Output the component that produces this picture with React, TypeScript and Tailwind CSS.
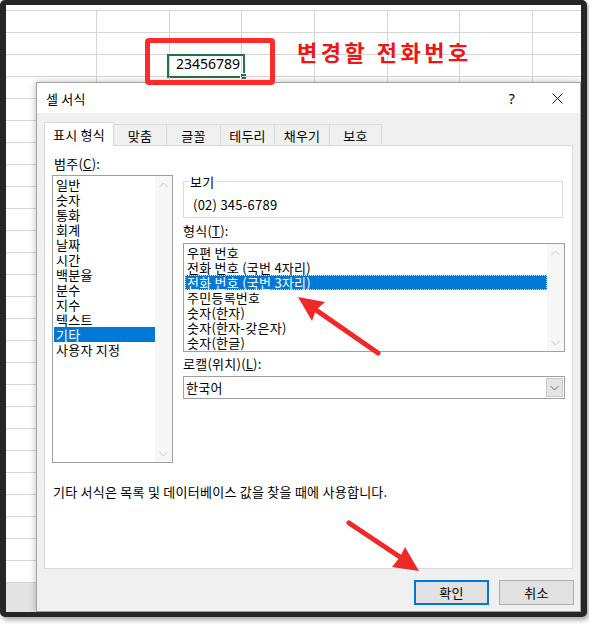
const CATEGORIES = ['일반', '숫자', '통화', '회계', '날짜', '시간', '백분율', '분수', '지수', '텍스트', '기타', '사용자 지정']
const FORMATS = ['우편 번호', '전화 번호 (국번 4자리)', '전화 번호 (국번 3자리)', '주민등록번호', '숫자(한자)', '숫자(한자-갖은자)', '숫자(한글)']
const TABS = [
  { label: '맞춤', w: 'w-[54px]' },
  { label: '글꼴', w: 'w-[55px]' },
  { label: '테두리', w: 'w-[55px]' },
  { label: '채우기', w: 'w-[56px]' },
  { label: '보호', w: 'w-[53px]' },
]
const COL_W = ['w-[91px]', 'w-[73px]', 'w-[72px]', 'w-[73px]', 'w-[73px]', 'w-[72px]', 'w-[73px]']

function Chevron({ up = false, color = '#c4c4c4' }: { up?: boolean; color?: string }) {
  return (
    <svg width="9" height="6" viewBox="0 0 9 6">
      <polyline
        points={up ? '0.5,5 4.5,1 8.5,5' : '0.5,1 4.5,5 8.5,1'}
        fill="none"
        stroke={color}
        strokeWidth="1"
      />
    </svg>
  )
}

function ScrollBar() {
  return (
    <div className="w-[17px] flex flex-col justify-between bg-[#f7f7f7]">
      <div className="h-[17px] flex items-center justify-center"><Chevron up /></div>
      <div className="h-[17px] flex items-center justify-center"><Chevron /></div>
    </div>
  )
}

function Sheet() {
  return (
    <div className="flex flex-col h-full">
      <div className="h-[6px] border-b border-[#d6d6d6]" />
      {Array.from({ length: 26 }).map((_, r) => (
        <div key={r} className="flex h-[22px]">
          {COL_W.map((w, c) => (
            <div key={c} className={`${w} shrink-0 border-r border-b border-[#d6d6d6] relative`}>
              {r === 2 && c === 2 && (
                <>
                  <div className="text-right pr-[1px] text-[14px] leading-[17px] text-black font-['Noto_Sans',sans-serif]">
                    23456789
                  </div>
                  {/* active cell */}
                  <div className="absolute left-[-3px] top-[-1px] w-[78px] h-[24px] border-2 border-[#217346]">
                    <span className="absolute right-[-4px] bottom-[-4px] w-[7px] h-[7px] bg-[#217346] border border-white" />
                  </div>
                </>
              )}
            </div>
          ))}
          <div className="flex-1 border-b border-[#d6d6d6]" />
        </div>
      ))}
      <div className="flex-1 bg-[#e4e4e4]" />
    </div>
  )
}

function Dialog() {
  return (
    <div className="absolute left-[30px] top-[77px] w-[545px] h-[530px] border border-[#a3a3a3] bg-white flex flex-col shadow-[0_0_7px_rgba(0,0,0,0.28)] text-[13px] tracking-[0.25px] text-black">
      {/* Title bar */}
      <div className="h-[30px] flex items-center pl-[9px] pr-[17px] bg-white">
        <span className="leading-[15px]">셀 서식</span>
        <span className="ml-auto text-[14px] leading-[15px] w-[10px] text-center font-['Noto_Sans',sans-serif]">?</span>
        <svg className="ml-[35px]" width="11" height="11" viewBox="0 0 11 11">
          <path d="M0.5 0.5 L10.5 10.5 M10.5 0.5 L0.5 10.5" stroke="#1a1a1a" strokeWidth="1" />
        </svg>
      </div>

      <div className="flex-1 bg-[#f0f0f0] px-[7px] pt-[9px] pb-[6px] flex flex-col">
        {/* Tabs */}
        <div className="flex items-end h-[23px]">
          <div className="relative z-10 self-start w-[70px] h-[24px] bg-white border border-b-0 border-[#d9d9d9] flex items-center justify-center leading-[15px]">
            표시 형식
          </div>
          {TABS.map(t => (
            <div
              key={t.label}
              className={`${t.w} -ml-px h-[21px] bg-[#f0f0f0] border border-b-0 border-[#d9d9d9] flex items-center justify-center leading-[15px]`}
            >
              {t.label}
            </div>
          ))}
        </div>

        {/* Panel */}
        <div className="h-[424px] bg-white border border-[#d9d9d9] flex flex-col pl-[7px] pr-[6px]">
          <div className="flex gap-[10px]">
            {/* Category */}
            <div className="w-[121px] pt-[10px] flex flex-col">
              <div className="pl-[2px] leading-[15px]">범주(<span className="underline">C</span>):</div>
              <div className="mt-[4px] h-[288px] border border-[#a0a0a0] flex">
                <div className="flex-1 pt-[1px] pl-[1px]">
                  {CATEGORIES.map(c => (
                    <div
                      key={c}
                      className={`pl-[2px] h-[15px] leading-[15px] whitespace-nowrap ${c === '기타' ? 'bg-[#0078d7] text-white' : ''}`}
                    >
                      {c}
                    </div>
                  ))}
                </div>
                <ScrollBar />
              </div>
            </div>

            {/* Right side */}
            <div className="w-[382px] pt-[28px] flex flex-col">
              <fieldset className="w-[380px] border border-[#dcdcdc] pb-[5px]">
                <legend className="ml-[5px] px-[1px] leading-[15px]">보기</legend>
                <div className="pl-[9px] pt-[8px] leading-[15px]">(02) 345-6789</div>
              </fieldset>

              <div className="mt-[5px] leading-[15px]">형식(<span className="underline">T</span>):</div>
              <div className="mt-[5px] h-[109px] border border-[#a0a0a0] flex">
                <div className="flex-1 pt-[1px] pl-[1px]">
                  {FORMATS.map((f, i) => (
                    <div
                      key={f}
                      className={`pl-[2px] h-[15px] leading-[15px] whitespace-nowrap ${
                        i === 2 ? 'bg-[#0078d7] text-white outline-1 outline-dotted outline-[#cfe3f7] outline-offset-[-1px]' : ''
                      }`}
                    >
                      {f}
                    </div>
                  ))}
                </div>
                <ScrollBar />
              </div>

              <div className="mt-[4px] leading-[15px]">로캘(위치)(<span className="underline">L</span>):</div>
              <div className="mt-[5px] h-[23px] border border-[#a0a0a0] flex">
                <div className="flex-1 pl-[2px] flex items-center leading-[15px]">한국어</div>
                <div className="w-[17px] m-px bg-[#e5e5e5] border border-[#c8c8c8] flex items-center justify-center">
                  <Chevron color="#6b6b6b" />
                </div>
              </div>
            </div>
          </div>

          <div className="mt-[21px] pl-[1px] leading-[15px]">
            기타 서식은 목록 및 데이터베이스 값을 찾을 때에 사용합니다.
          </div>
        </div>

        {/* Buttons */}
        <div className="mt-[11px] -mr-px flex justify-end gap-[10px]">
          <button className="w-[75px] h-[25px] bg-[#e1e1e1] border-2 border-[#0078d7] leading-[15px]">확인</button>
          <button className="w-[75px] h-[25px] bg-[#e1e1e1] border border-[#adadad] leading-[15px]">취소</button>
        </div>
      </div>
    </div>
  )
}

function Arrows() {
  return (
    <svg className="absolute left-0 top-0 pointer-events-none" width="589" height="625" viewBox="0 0 589 625">
      {/* to the selected format */}
      <line x1="378" y1="353" x2="316" y2="310" stroke="#f02828" strokeWidth="5" strokeLinecap="round" />
      <polygon points="298,297 325,302 316,310 312,321" fill="#f02828" />
      {/* to the OK button */}
      <line x1="349" y1="523" x2="400" y2="557" stroke="#f02828" strokeWidth="5" strokeLinecap="round" />
      <polygon points="419,571 392,567 400,557 405,547" fill="#f02828" />
    </svg>
  )
}

export default function App() {
  return (
    <div className="relative w-[589px] h-[625px] bg-white overflow-hidden font-['Noto_Sans_CJK_KR','Noto_Sans',sans-serif]">
      <div className="w-[587px] h-[617px] border-x-[6px] border-y-[5px] border-[#262626] rounded-[5px] shadow-[2px_3px_5px_rgba(0,0,0,0.35)] bg-white">
        <div className="relative w-full h-full overflow-hidden">
          <Sheet />
          <Dialog />
        </div>
      </div>

      {/* annotations */}
      <div className="absolute left-[145px] top-[38px] w-[130px] h-[47px] border-[5px] border-[#ff2b2b] rounded-[4px]" />
      <div className="absolute left-[297px] top-[40px] text-[22px] leading-[22px] font-bold text-[#f01414] tracking-[3.5px] whitespace-nowrap">
        변경할 전화번호
      </div>
      <Arrows />
    </div>
  )
}
